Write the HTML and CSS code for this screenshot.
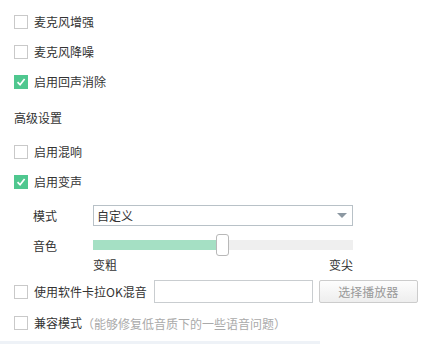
FILE: index.html
```html
<!DOCTYPE html>
<html lang="zh">
<head>
<meta charset="utf-8">
<link rel="stylesheet" href="styles.css">
</head>
<body>
<div class="panel">
  <div class="row"><span class="cb"></span><span class="txt">麦克风增强</span></div>
  <div class="row"><span class="cb"></span><span class="txt">麦克风降噪</span></div>
  <div class="row"><span class="cb on"><svg viewBox="0 0 14 14" width="14" height="14"><path d="M3 7.2 L5.9 10.2 L11.2 3.6" fill="none" stroke="#fff" stroke-width="2"/></svg></span><span class="txt">启用回声消除</span></div>
  <div class="heading">高级设置</div>
  <div class="row"><span class="cb"></span><span class="txt">启用混响</span></div>
  <div class="row"><span class="cb on"><svg viewBox="0 0 14 14" width="14" height="14"><path d="M3 7.2 L5.9 10.2 L11.2 3.6" fill="none" stroke="#fff" stroke-width="2"/></svg></span><span class="txt">启用变声</span></div>
  <div class="sub mode">
    <span class="lab">模式</span>
    <div class="select"><span>自定义</span><span class="arrow"></span></div>
  </div>
  <div class="sub tone">
    <span class="lab">音色</span>
    <div class="slider">
      <div class="fill"></div>
      <div class="thumb"></div>
      <div class="rest"></div>
    </div>
  </div>
  <div class="sub ends">
    <span class="lab"></span>
    <div class="endlabels"><span>变粗</span><span>变尖</span></div>
  </div>
  <div class="karaoke">
    <span class="cb"></span><span class="txt">使用软件卡拉OK混音</span>
    <div class="input"></div>
    <div class="btn">选择播放器</div>
  </div>
  <div class="row compat"><span class="cb"></span><span class="txt">兼容模式</span><span class="hint">（能够修复低音质下的一些语音问题）</span></div>
</div>
<div class="strip"></div>
</body>
</html>
```

FILE: styles.css
```css
* { box-sizing: border-box; }
html, body { margin: 0; padding: 0; background: #fff; }
body {
  width: 433px; height: 344px; overflow: hidden; position: relative;
  font-family: "Noto Sans CJK SC", "Noto Sans", sans-serif;
  font-size: 12px; color: #333;
}
.panel { padding: 7px 0 0 14px; display: flex; flex-direction: column; }
.row { height: 30px; display: flex; align-items: center; }
.cb {
  width: 14px; height: 14px; border: 1px solid #c9c9c9; background: #fff;
  display: inline-flex; align-items: center; justify-content: center; flex: none;
}
.cb.on { background: #4fc78f; border-color: #4fc78f; }
.cb.on svg { display: block; }
.txt { margin-left: 6px; line-height: 14px; }
.heading { height: 40px; display: flex; align-items: center; }
.sub { display: flex; align-items: center; padding-left: 19px; }
.lab { width: 60px; flex: none; }
.mode { margin-top: 8px; height: 21px; }
.select {
  width: 260px; height: 21px; border: 1px solid #b8c1c7; background: #fff;
  display: flex; align-items: center; justify-content: space-between; padding: 0 5px 0 3px;
}
.arrow {
  width: 0; height: 0; border-left: 5px solid transparent; border-right: 5px solid transparent;
  border-top: 5px solid #8c98a2;
}
.tone { margin-top: 8px; height: 22px; }
.slider { width: 260px; height: 22px; display: flex; align-items: center; }
.fill { width: 123px; height: 10px; background: #a5e0c4; }
.thumb {
  width: 13px; height: 22px; border: 1px solid #b8b8b8; border-radius: 3px; background: #fff; flex: none;
}
.rest { flex: 1; height: 10px; background: #efefef; }
.ends { margin-top: 2px; height: 14px; }
.endlabels { width: 260px; display: flex; justify-content: space-between; line-height: 14px; }
.karaoke { margin-top: 8px; height: 23px; display: flex; align-items: center; }
.input { width: 159px; height: 23px; border: 1px solid #c9cdd0; margin-left: 7px; background: #fff; }
.btn {
  width: 99px; height: 23px; margin-left: 6px; border: 1px solid #ccc; border-radius: 2px;
  background: linear-gradient(#fdfdfd, #eeeeee); color: #999; display: flex; align-items: center; justify-content: center;
}
.compat { margin-top: 5px; }
.hint { color: #aaa; }
.strip { position: absolute; left: 0; bottom: 0; width: 320px; height: 3px; background: #eef2f7; }
```
